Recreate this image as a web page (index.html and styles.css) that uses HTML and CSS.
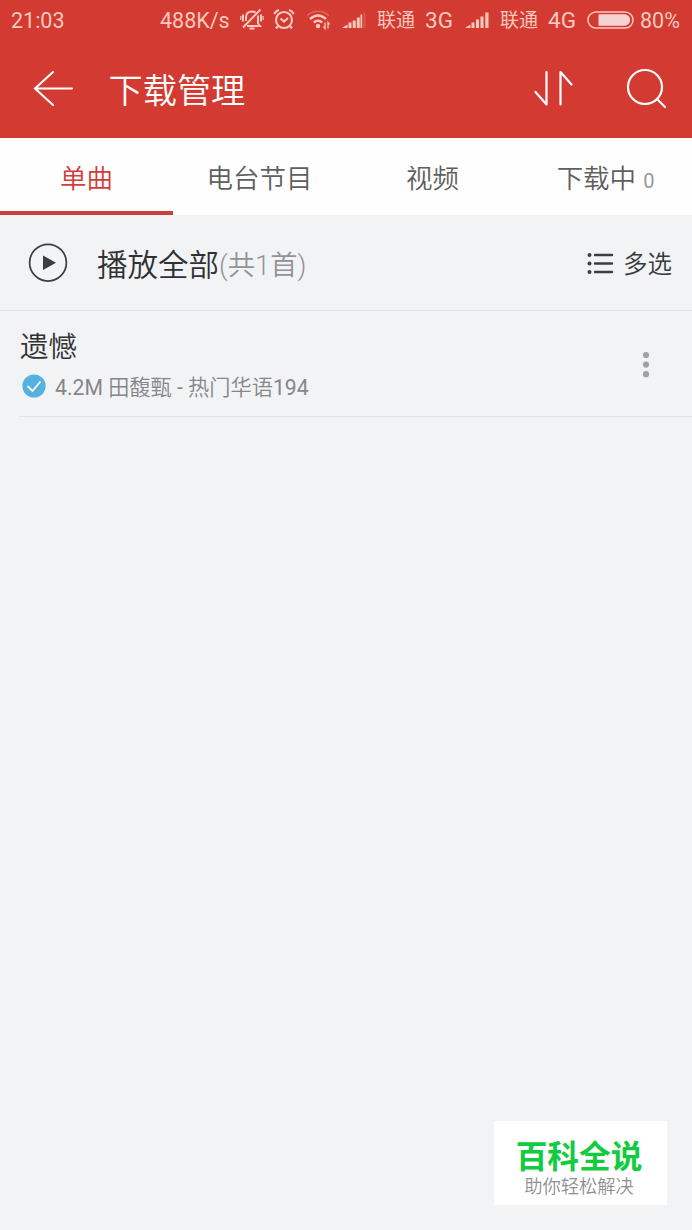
FILE: index.html
```html
<!DOCTYPE html>
<html lang="zh-CN">
<head>
<meta charset="utf-8">
<title>下载管理</title>
<link rel="stylesheet" href="styles.css">
</head>
<body>
<div class="screen">
  <header class="header">
    <div class="status">
      <span class="clock">21:03</span>
      <span class="speed">488K/s</span>
      <svg class="mute" width="24" height="24" viewBox="0 0 24 24" fill="none" stroke="currentColor" stroke-width="2">
        <path d="M6 13V9.500C6 5.500 8 3.500 12 3.500q2 0 3.500 1M18 7.500v8l2 2.500H7M9.500 20.500h5M20.500 1.500L3 19.500M3 6.500v7M21 6.500v7"/>
        <path d="M.8 8v4M23.200 8v4" stroke-width="1.200"/>
      </svg>
      <svg class="alarm" width="22" height="22" viewBox="0 0 22 22" fill="none" stroke="currentColor" stroke-width="2.100">
        <circle cx="11" cy="11" r="8"/><path d="M7.500 9.500l3.500 3 4-3.500M1.300 5Q2.500 2 6 1M20.700 5Q19.500 2 16 1M5 17L3 19.500M17 17l2 2.500"/>
      </svg>
      <svg class="wifi" width="26" height="20" viewBox="0 0 26 20" fill="none" stroke="currentColor" stroke-width="2.400">
        <path d="M0 5.500Q11 -3 22 5.500" opacity=".3" stroke-width="1.700"/>
        <path d="M3 9Q11 2 19 9M6.800 12.500Q11 9 15.200 12.500"/>
        <circle cx="11" cy="16" r="2.200" fill="currentColor" stroke="none"/>
        <path d="M18 12.500v6l-1.500-2M21 18.500v-6l1.500 2" stroke-width="1.300"/>
      </svg>
      <svg class="signal first" width="25" height="18" viewBox="0 0 25 18" fill="currentColor">
        <path d="M0 17l5.500-3.500V17zM6.500 11.500h3V17h-3zM10.700 9.500h3V17h-3zM14.800 6.500h3V17h-3zM18.500 3.500h1.700V17h-1.700z"/><path d="M21.500 1.500h2V17h-2z" opacity=".2"/>
      </svg>
      <span class="carrier">联通</span><span class="net">3G</span>
      <svg class="signal second" width="25" height="18" viewBox="0 0 25 18" fill="currentColor">
        <path d="M0 17l5.500-3.500V17zM6.500 11.500h3V17h-3zM11 8.500h3V17h-3zM15.500 5.500h3V17h-3zM20.300 1.500h3.200V17h-3.200z"/>
      </svg>
      <span class="carrier">联通</span><span class="net">4G</span>
      <svg class="battery" width="47" height="18" viewBox="0 0 47 18" fill="none" stroke="currentColor">
        <rect x="1" y="1" width="45" height="16" rx="8" stroke-width="1.500"/><path d="M11.500 3.300h26a5.700 5.700 0 010 11.400h-26z" fill="#f6d3d3" stroke="none"/>
      </svg>
      <span class="percent">80%</span>
    </div>
    <div class="bar">
      <svg class="back" width="42" height="40" viewBox="0 0 42 40" fill="none" stroke="currentColor" stroke-width="2.100" stroke-linecap="round">
        <path d="M21 3L3 19.500 21 36M3 19.500h37"/>
      </svg>
      <h1 class="title">下载管理</h1>
      <svg class="sort" width="40" height="40" viewBox="0 0 40 40" fill="none" stroke="currentColor" stroke-width="2.200" stroke-linecap="round" stroke-linejoin="round">
        <path d="M13.500 3v32.500L2.500 23M27.500 35.500V3l11 12.500"/>
      </svg>
      <svg class="search" width="42" height="42" viewBox="0 0 42 42" fill="none" stroke="currentColor" stroke-width="2.200" stroke-linecap="round">
        <circle cx="19" cy="19" r="17"/><path d="M31 31l8 8"/>
      </svg>
    </div>
  </header>
  <nav class="tabs">
    <a class="tab active">单曲</a>
    <a class="tab">电台节目</a>
    <a class="tab">视频</a>
    <a class="tab">下载中<span class="badge">0</span></a>
  </nav>
  <main>
    <section class="playall">
      <svg class="play" width="40" height="40" viewBox="0 0 40 40">
        <circle cx="20" cy="19.700" r="18.400" fill="none" stroke="#3c3d3f" stroke-width="1.700"/><path d="M15 12.500l13 7.200L15 27z" fill="#3c3d3f"/>
      </svg>
      <span class="label">播放全部</span><span class="count">(共1首)</span>
      <svg class="list" width="27" height="22" viewBox="0 0 27 22" fill="#3c3d3f" stroke="#3c3d3f" stroke-width="2.400" stroke-linecap="round">
        <g stroke="none"><circle cx="2.500" cy="3" r="2"/><circle cx="2.500" cy="11.500" r="2"/><circle cx="2.500" cy="20" r="2"/></g>
        <path d="M8 3h17M8 11.500h17M8 20h17"/>
      </svg>
      <span class="multi">多选</span>
    </section>
    <article class="song">
      <div class="info">
        <h2 class="name">遗憾</h2>
        <div class="meta">
          <svg class="done" width="24" height="24" viewBox="0 0 24 24" fill="none">
            <circle cx="12" cy="12" r="11.600" fill="#55b1df"/><path d="M5.500 12l5 5 8-9.500" stroke="#fff" stroke-width="1.800"/>
          </svg>
          <span class="detail"><span class="latin">4.2M </span>田馥甄<span class="latin"> - </span>热门华语<span class="latin">194</span></span>
        </div>
      </div>
      <svg class="more" width="8" height="28" viewBox="0 0 8 28" fill="#a0a1a3">
        <circle cx="4" cy="4" r="3.100"/><circle cx="4" cy="13.600" r="3.100"/><circle cx="4" cy="23.200" r="3.100"/>
      </svg>
    </article>
  </main>
  <aside class="watermark">
    <strong class="brand">百科全说</strong>
    <span class="slogan">助你轻松解决</span>
  </aside>
</div>
</body>
</html>
```
FILE: styles.css
```css
* { box-sizing: border-box; }
body {
  margin: 0;
  font-family: Roboto, "Noto Sans CJK SC", sans-serif;
  background: #f2f3f5;
}
svg { display: block; flex: none; }
h1, h2 { margin: 0; font-weight: 400; }
.screen {
  position: relative;
  width: 692px;
  height: 1230px;
  overflow: hidden;
  background: #f2f3f5;
}
.header { height: 138px; background: #d33a31; color: #fff; }
.status {
  display: flex;
  align-items: center;
  height: 40px;
  padding-left: 11px;
  color: #fbc9bd;
  font-size: 21.5px;
  line-height: 41px;
  white-space: nowrap;
}
.clock { width: 149px; }
.speed { width: 80px; }
.alarm { margin-left: 9px; }
.wifi { margin-left: 12px; }
.signal.first { margin-left: 9px; }
.carrier { width: 48px; margin-left: 10px; font-size: 19px; line-height: 43px; }
.net { width: 30px; font-size: 22.500px; }
.signal.second { margin-left: 10px; }
.battery { margin-left: 9px; }
.percent { margin-left: 6px; }
.bar { display: flex; align-items: center; height: 98px; padding: 0 24px 0 32px; }
.title { margin-left: 34.500px; padding-top: 4px; font-size: 34.200px; font-weight: 350; line-height: 50px; }
.sort { margin-left: auto; }
.search { margin-left: 53px; }
.tabs { display: flex; height: 77px; background: #fefefe; }
.tab {
  flex: 1;
  height: 77px;
  color: #5f5f5f;
  font-size: 26.500px;
  font-weight: 350;
  line-height: 81px;
  text-align: center;
  white-space: nowrap;
}
.active { color: #d13d38; border-bottom: 4px solid #c93f3b; }
.badge { margin-left: 7px; color: #999; font-size: 20px; font-weight: 400; }
.playall {
  display: flex;
  align-items: center;
  height: 96px;
  padding: 0 20px 0 28px;
  border-bottom: 1px solid #e5e6e8;
  font-weight: 350;
}
.label { margin-left: 29px; color: #303133; font-size: 30.500px; }
.count { color: #929395; font-size: 27.300px; }
.list { margin-left: auto; }
.multi { margin-left: 9px; color: #38393b; font-size: 24.500px; }
.song {
  display: flex;
  align-items: flex-start;
  justify-content: space-between;
  height: 106px;
  margin-left: 19px;
  padding: 15px 42px 0 0;
  border-bottom: 1px solid #e1e2e4;
}
.name { padding: 4px 0 0 1px; color: #303133; font-size: 28.500px; font-weight: 350; line-height: 36px; }
.meta { display: flex; align-items: center; height: 40px; padding-left: 3px; }
.detail { margin-left: 9px; padding-bottom: 1px; color: #858688; font-size: 21.200px; font-weight: 350; }
.latin { font-weight: 400; white-space: pre; }
.more { margin-top: 25px; }
.watermark {
  position: absolute;
  right: 25px;
  bottom: 25px;
  display: flex;
  flex-direction: column;
  align-items: center;
  width: 173px;
  height: 84px;
  padding: 16px 3px 0 0;
  background: #fff;
}
.brand { color: #12cb3e; font-size: 31.700px; font-weight: 700; line-height: 41px; }
.slogan { color: #8f8f8f; font-size: 18.300px; font-weight: 350; line-height: 18px; }
```
